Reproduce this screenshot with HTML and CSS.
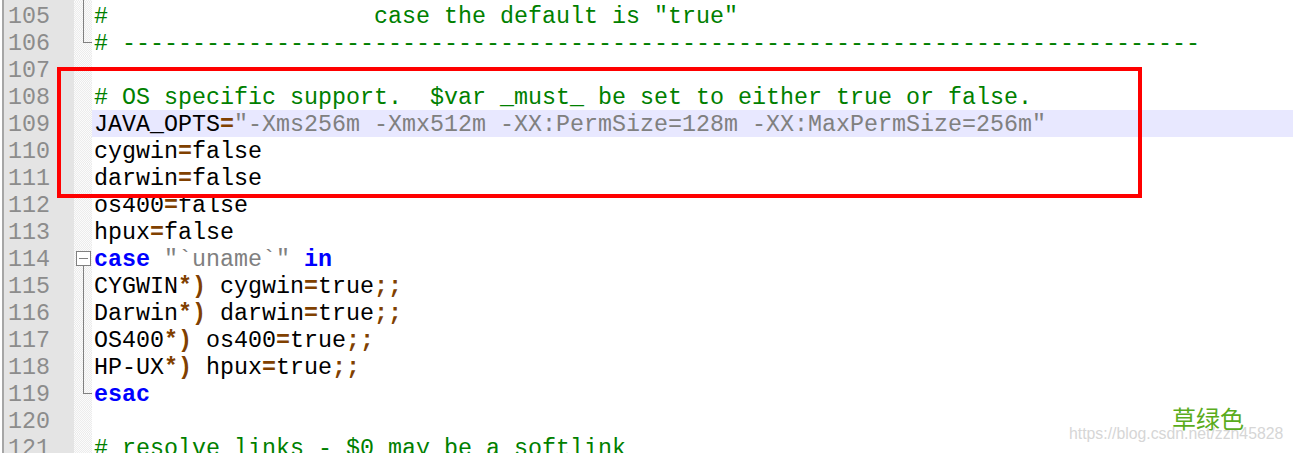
FILE: index.html
```html
<!DOCTYPE html>
<html>
<head>
<meta charset="utf-8">
<link rel="stylesheet" href="styles.css">
</head>
<body>
<div class="editor">
  <div class="row"><span class="ln"></span><span class="fold v"></span><span class="code"></span></div>
  <div class="row"><span class="ln">105</span><span class="fold v"></span><span class="code"><span class="cm">#                   case the default is "true"</span></span></div>
  <div class="row"><span class="ln">106</span><span class="fold end"></span><span class="code"><span class="cm"># -----------------------------------------------------------------------------</span></span></div>
  <div class="row"><span class="ln">107</span><span class="fold"></span><span class="code"></span></div>
  <div class="row"><span class="ln">108</span><span class="fold"></span><span class="code"><span class="cm"># OS specific support.  $var _must_ be set to either true or false.</span></span></div>
  <div class="row"><span class="ln">109</span><span class="fold"></span><span class="code hl">JAVA_OPTS<span class="op">=</span><span class="st">"-Xms256m -Xmx512m -XX:PermSize=128m -XX:MaxPermSize=256m"</span></span></div>
  <div class="row"><span class="ln">110</span><span class="fold"></span><span class="code">cygwin<span class="op">=</span>false</span></div>
  <div class="row"><span class="ln">111</span><span class="fold"></span><span class="code">darwin<span class="op">=</span>false</span></div>
  <div class="row"><span class="ln">112</span><span class="fold"></span><span class="code">os400<span class="op">=</span>false</span></div>
  <div class="row"><span class="ln">113</span><span class="fold"></span><span class="code">hpux<span class="op">=</span>false</span></div>
  <div class="row"><span class="ln">114</span><span class="fold start"></span><span class="code"><span class="kw">case</span> <span class="st">"`uname`"</span> <span class="kw">in</span></span></div>
  <div class="row"><span class="ln">115</span><span class="fold v"></span><span class="code">CYGWIN<span class="op">*)</span> cygwin<span class="op">=</span>true<span class="op">;;</span></span></div>
  <div class="row"><span class="ln">116</span><span class="fold v"></span><span class="code">Darwin<span class="op">*)</span> darwin<span class="op">=</span>true<span class="op">;;</span></span></div>
  <div class="row"><span class="ln">117</span><span class="fold v"></span><span class="code">OS400<span class="op">*)</span> os400<span class="op">=</span>true<span class="op">;;</span></span></div>
  <div class="row"><span class="ln">118</span><span class="fold v"></span><span class="code">HP-UX<span class="op">*)</span> hpux<span class="op">=</span>true<span class="op">;;</span></span></div>
  <div class="row"><span class="ln">119</span><span class="fold end"></span><span class="code"><span class="kw">esac</span></span></div>
  <div class="row"><span class="ln">120</span><span class="fold"></span><span class="code"></span></div>
  <div class="row"><span class="ln">121</span><span class="fold"></span><span class="code"><span class="cm"># resolve links - $0 may be a softlink</span></span></div>
</div>
<div class="redbox"></div>
<div class="mark">草绿色</div>
<div class="url">https://blog.csdn.net/zzn45828</div>
</body>
</html>
```
FILE: styles.css
```css
html, body {
  margin: 0;
  padding: 0;
  background: #ffffff;
  overflow: hidden;
  width: 1293px;
  height: 453px;
}

body {
  position: relative;
  font-family: "Courier New", "Liberation Mono", monospace;
  font-size: 23.33px;
}

.editor {
  display: flex;
  flex-direction: column;
  margin-top: -25px;
}

.row {
  display: flex;
  height: 27px;
  line-height: 27px;
}

.ln {
  box-sizing: border-box;
  width: 72px;
  margin-left: 2px;
  border-left: 2px solid #a6a6a6;
  background: #e4e4e4;
  color: #8c8c8c;
  text-align: right;
  padding-right: 24px;
  padding-top: 2px;
  white-space: pre;
}

.fold {
  position: relative;
  width: 18px;
  flex: none;
  background: repeating-conic-gradient(#ececec 0 25%, #fbfbfb 0 50%) 0 0 / 2px 2px;
}

.fold.v::before {
  content: "";
  position: absolute;
  left: 9px;
  top: 0;
  bottom: 0;
  width: 1px;
  background: #808080;
}

.fold.end::before {
  content: "";
  position: absolute;
  left: 9px;
  top: 0;
  height: 14px;
  width: 1px;
  background: #808080;
}

.fold.end::after {
  content: "";
  position: absolute;
  left: 9px;
  right: 0;
  top: 13px;
  height: 1px;
  background: #808080;
}

.fold.start::before {
  content: "";
  position: absolute;
  box-sizing: border-box;
  left: 2px;
  top: 6px;
  width: 15px;
  height: 15px;
  border: 1px solid #808080;
  background: linear-gradient(#808080, #808080) center / 9px 1px no-repeat, #ffffff;
}

.fold.start::after {
  content: "";
  position: absolute;
  left: 9px;
  top: 21px;
  bottom: 0;
  width: 1px;
  background: #808080;
}

.code {
  box-sizing: border-box;
  flex: 1;
  padding-left: 2px;
  padding-top: 2px;
  color: #000000;
  white-space: pre;
}

.code.hl {
  background: #e8e8ff;
}

.cm { color: #008000; }
.st { color: #808080; }
.op { color: #804000; font-weight: bold; }
.kw { color: #0000ff; font-weight: bold; }

.redbox {
  position: absolute;
  box-sizing: border-box;
  left: 57px;
  top: 67px;
  width: 1085px;
  height: 131px;
  border: 4px solid #ff0000;
}

.mark {
  position: absolute;
  left: 1172px;
  top: 403px;
  font-family: "Noto Sans CJK SC", sans-serif;
  font-size: 24px;
  line-height: 30px;
  color: #5aac1c;
}

.url {
  position: absolute;
  left: 1069px;
  top: 425px;
  font-family: "Liberation Sans", Arial, sans-serif;
  font-size: 15.8px;
  line-height: 18px;
  color: #d6d6d6;
}
```
